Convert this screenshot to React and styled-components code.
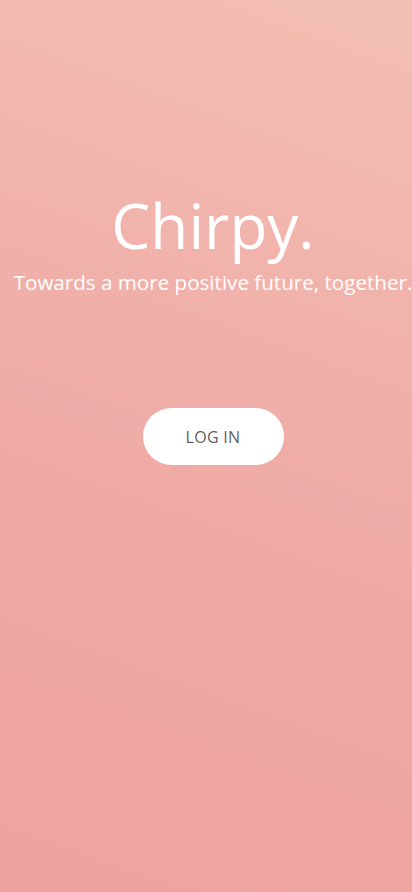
import React from 'react';
import styled, { createGlobalStyle } from 'styled-components';

const GlobalStyle = createGlobalStyle`
  html, body {
    margin: 0;
    padding: 0;
  }
  body {
    font-family: "Open Sans", "Noto Sans", sans-serif;
  }
`;

const Screen = styled.main`
  width: 412px;
  height: 892px;
  overflow: hidden;
  display: flex;
  flex-direction: column;
  align-items: center;
  padding: 186px 0 0 14px;
  box-sizing: border-box;
  background: linear-gradient(20deg, #eea29e 0%, #efaaa6 45%, #f3bfb3 100%);
  color: #fff;
`;

const Title = styled.h1`
  margin: 0;
  font-size: 62px;
  font-weight: 400;
  line-height: 78px;
`;

const Tagline = styled.p`
  margin: 4px 0 0;
  text-align: center;
  font-size: 20.6px;
  line-height: 28px;
  white-space: nowrap;
`;

const Button = styled.button`
  margin-top: 112px;
  width: 141px;
  height: 57px;
  border: none;
  border-radius: 29px;
  background: #fff;
  color: #5f5f5f;
  font-family: "Open Sans", "Noto Sans", sans-serif;
  font-size: 16px;
  letter-spacing: 0.3px;
  cursor: pointer;
`;

export default function App() {
  return (
    <>
      <GlobalStyle />
      <Screen>
        <Title>Chirpy.</Title>
        <Tagline>Towards a more positive future, together.</Tagline>
        <Button>LOG IN</Button>
      </Screen>
    </>
  );
}
